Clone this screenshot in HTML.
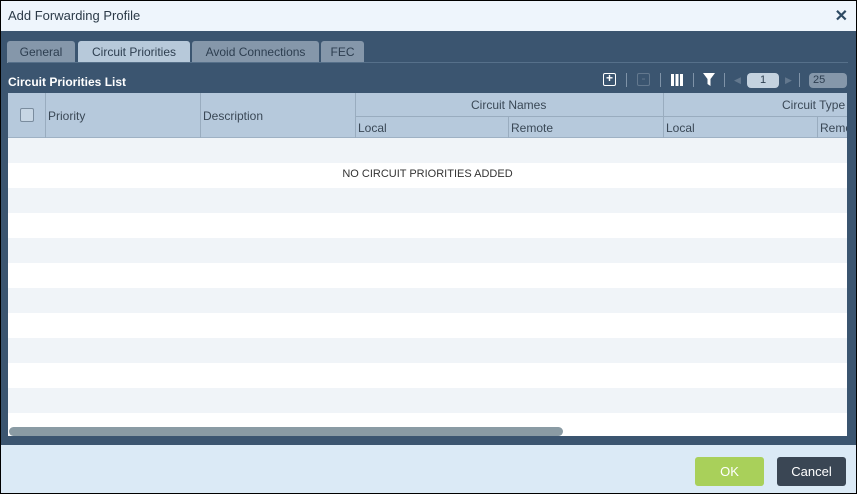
<!DOCTYPE html>
<html><head><style>
*{box-sizing:border-box;margin:0;padding:0}
body{width:857px;height:494px;overflow:hidden;font-family:"Liberation Sans",sans-serif;background:#000;position:relative}
.f{position:absolute;left:1px;top:1px;width:855px;height:492px;background:#3b5570}
.title{position:absolute;left:0;top:0;width:855px;height:30px;background:#eef5fc;font-size:13px;color:#2b3a48;padding:7px 0 0 7px}
.x{position:absolute;right:8px;top:5px;font-size:16px;font-weight:bold;color:#2d4a63}
.tab{position:absolute;top:40px;height:22px;background:#8597aa;color:#2d3e50;font-size:12px;text-align:center;line-height:22px;border-radius:3px 3px 0 0}
.tline{position:absolute;left:7px;top:61px;width:840px;height:1px;background:#56708a}
.lt{position:absolute;left:7px;top:74px;color:#fff;font-size:12px;font-weight:bold}
.tbl{position:absolute;left:7px;top:92px;width:839px;height:343px;background:#fff;overflow:hidden}
.hd{position:absolute;top:0;height:45px;background:#b6c9dc;border-bottom:1px solid #9eb1c4}
.th{position:absolute;font-size:12px;color:#3a4856}
.vl{position:absolute;width:1px;background:#99acbf}
.row{position:absolute;left:0;width:839px;height:25px;background:#f0f4f8}
.foot{position:absolute;left:0;top:444px;width:855px;height:48px;background:#dbeaf6}
.btn{position:absolute;top:12px;height:29px;border-radius:3px;color:#fff;font-size:13px;text-align:center;line-height:29px}
.tb{position:absolute;top:72px;color:#fff;font-size:12px}
.sep{position:absolute;top:72px;width:1px;height:14px;background:#7f93a8}
</style></head><body><div class="f">
<div class="title">Add Forwarding Profile<span class="x">✕</span></div>
<div class="tab" style="left:6px;width:68px">General</div>
<div class="tab" style="left:77px;width:112px;background:#b7c9da">Circuit Priorities</div>
<div class="tab" style="left:191px;width:127px">Avoid Connections</div>
<div class="tab" style="left:320px;width:43px">FEC</div>
<div class="tline"></div>
<div class="lt">Circuit Priorities List</div>
<div style="position:absolute;left:602px;top:72px;width:13px;height:13px;border:1.5px solid #fff;border-radius:2px;color:#fff;font-size:12px;line-height:9px;text-align:center;font-weight:bold">+</div>
<div class="sep" style="left:625px"></div>
<div style="position:absolute;left:636px;top:72px;width:13px;height:13px;border:1px solid #63788e;border-radius:2px;color:#63788e;font-size:12px;line-height:9px;text-align:center">-</div>
<div class="sep" style="left:659px"></div>
<div style="position:absolute;left:670px;top:73px;width:12px;height:12px;background:repeating-linear-gradient(90deg,#fff 0 3px,transparent 3px 4.5px)"></div>
<div class="sep" style="left:692px"></div>
<svg style="position:absolute;left:702px;top:72px" width="12" height="13"><path d="M0 0H12L7.5 6V13L4.5 11V6Z" fill="#fff"/></svg>
<div class="sep" style="left:723px"></div>
<div style="position:absolute;left:733px;top:74px;color:#63788e;font-size:9px">◀</div>
<div style="position:absolute;left:746px;top:72px;width:32px;height:15px;background:#c4d2df;border-radius:4px;font-size:11px;color:#2d3e50;text-align:center;line-height:15px">1</div>
<div style="position:absolute;left:784px;top:74px;color:#63788e;font-size:9px">▶</div>
<div class="sep" style="left:798px"></div>
<div style="position:absolute;left:808px;top:72px;width:38px;height:15px;background:#8597aa;border-radius:4px;font-size:11px;color:#2d3e50;padding-left:4px;line-height:15px">25</div>
<div class="tbl">
<div class="hd" style="left:0;width:839px"></div>
<div style="position:absolute;left:12px;top:15px;width:14px;height:14px;border:1px solid #7a8c9e;border-radius:2px;background:#c7d6e4"></div>
<div class="vl" style="left:37px;top:0;height:45px"></div>
<div class="vl" style="left:192px;top:0;height:45px"></div>
<div class="vl" style="left:347px;top:0;height:45px"></div>
<div class="vl" style="left:655px;top:0;height:45px"></div>
<div class="vl" style="left:500px;top:23px;height:22px"></div>
<div class="vl" style="left:809px;top:23px;height:22px"></div>
<div style="position:absolute;left:347px;top:23px;width:492px;height:1px;background:#99acbf"></div>
<div class="th" style="left:40px;top:16px">Priority</div>
<div class="th" style="left:195px;top:16px">Description</div>
<div class="th" style="left:463px;top:5px">Circuit Names</div>
<div class="th" style="left:774px;top:5px">Circuit Type</div>
<div class="th" style="left:350px;top:28px">Local</div>
<div class="th" style="left:503px;top:28px">Remote</div>
<div class="th" style="left:658px;top:28px">Local</div>
<div class="th" style="left:812px;top:28px">Remote</div>
<div class="row" style="top:45px"></div>
<div class="row" style="top:95px"></div>
<div class="row" style="top:145px"></div>
<div class="row" style="top:195px"></div>
<div class="row" style="top:245px"></div>
<div class="row" style="top:295px"></div>
<div style="position:absolute;left:0;width:839px;top:75px;text-align:center;font-size:11px;color:#333">NO CIRCUIT PRIORITIES ADDED</div>
<div style="position:absolute;left:1px;top:334px;width:554px;height:9px;background:#8a9ba4;border-radius:5px"></div>
</div>
<div class="foot">
<div class="btn" style="left:694px;width:69px;background:#a9d05a">OK</div>
<div class="btn" style="left:776px;width:69px;background:#3a4654">Cancel</div>
</div>
</div></body></html>
